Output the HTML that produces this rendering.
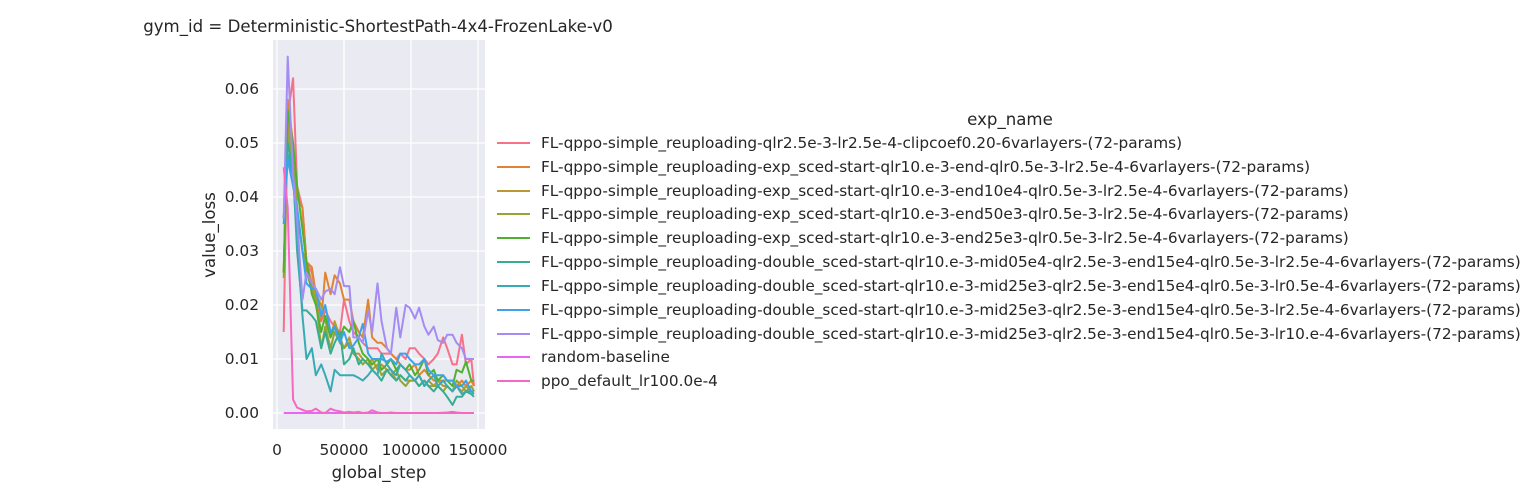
<!DOCTYPE html>
<html><head><meta charset="utf-8"><style>
html,body{margin:0;padding:0;background:#fff}
svg{display:block}
text{font-family:"DejaVu Sans","Liberation Sans",sans-serif;fill:#262626}
</style></head><body>
<svg width="1534" height="500" viewBox="0 0 1534 500" xmlns="http://www.w3.org/2000/svg">
<text x="378" y="32" font-size="16.6" text-anchor="middle">gym_id = Deterministic-ShortestPath-4x4-FrozenLake-v0</text>
<rect x="273" y="40" width="212" height="389" fill="#eaeaf2"/>
<g stroke="#fff" stroke-width="1.3">
<line x1="277" y1="40" x2="277" y2="429"/><line x1="344" y1="40" x2="344" y2="429"/><line x1="411" y1="40" x2="411" y2="429"/><line x1="478" y1="40" x2="478" y2="429"/>
<line x1="273" y1="413" x2="485" y2="413"/><line x1="273" y1="359" x2="485" y2="359"/><line x1="273" y1="305" x2="485" y2="305"/><line x1="273" y1="251" x2="485" y2="251"/><line x1="273" y1="197" x2="485" y2="197"/><line x1="273" y1="143" x2="485" y2="143"/><line x1="273" y1="89" x2="485" y2="89"/>
</g>
<g font-size="15.4" text-anchor="end">
<text x="259" y="418">0.00</text><text x="259" y="364">0.01</text><text x="259" y="310">0.02</text><text x="259" y="256">0.03</text><text x="259" y="202">0.04</text><text x="259" y="148">0.05</text><text x="259" y="94">0.06</text>
</g>
<g font-size="15.4" text-anchor="middle">
<text x="277" y="455">0</text><text x="344" y="455">50000</text><text x="411" y="455">100000</text><text x="478" y="455">150000</text>
<text x="379" y="478" font-size="16.6">global_step</text>
<text transform="translate(215,235) rotate(-90)" font-size="16.6">value_loss</text>
</g>
<g fill="none" stroke-width="2" stroke-linejoin="round" transform="translate(277,413) scale(1.34,-5.4)">
<polyline vector-effect="non-scaling-stroke" stroke="#f77189" points="5,15 8,55 12,62 15,42 19,38 22,28 26,26 29,22 33,17 36,19 40,17 43,16 47,15 50,21 54,17 57,15 61,14 64,13 68,12 71,12 75,12 78,11 82,11 85,11 89,10 92,11 96,10 99,12 103,12 106,11 110,10 113,9 117,10 120,11 124,14 127,12 131,9 134,9 138,14.5 141,9 145,10 147,5"/>
<polyline vector-effect="non-scaling-stroke" stroke="#e18432" points="5,26 8,58 12,50 15,40 19,38 22,28 26,27 29,22 33,17 36,26 40,22 43,25.5 47,24 50,21 54,21 57,17 61,15 64,14 68,21 71,14 75,13 78,13 82,12 85,11 89,10 92,9 96,8 99,8 103,9 106,7 110,8 113,7 117,6 120,6 124,6 127,6 131,6 134,5 138,6 141,5 145,6 147,5"/>
<polyline vector-effect="non-scaling-stroke" stroke="#bb9832" points="5,26 8,54 12,48 15,38 19,30 22,28 26,24 29,22 33,20 36,17 40,14 43,17 47,14 50,12 54,14 57,11 61,11 64,10 68,9 71,10 75,8 78,9 82,8 85,8 89,6 92,7 96,6 99,6 103,6 106,5 110,6 113,5 117,5 120,6 124,5 127,5 131,4 134,5 138,4 141,5 145,4 147,4"/>
<polyline vector-effect="non-scaling-stroke" stroke="#97a431" points="5,25 8,52 12,46 15,37 19,30 22,26 26,23 29,21 33,12 36,16 40,12 43,15 47,13 50,12 54,13 57,11 61,10 64,9 68,10 71,8 75,9 78,7 82,8 85,7 89,8 92,6 96,5 99,6 103,6 106,7 110,5 113,6 117,5 120,5 124,4 127,5 131,4 134,6 138,5 141,4 145,5 147,4"/>
<polyline vector-effect="non-scaling-stroke" stroke="#50b131" points="5,26 8,56 12,50 15,42 19,34 22,28 26,22 29,20 33,15 36,18 40,14 43,16 47,14 50,16 54,15 57,17 61,13 64,11 68,10 71,9 75,10 78,8 82,9 85,10 89,8 92,9 96,8 99,9 103,7 106,8 110,10 113,7 117,8 120,6 124,7 127,6 131,5 134,8 138,7.5 141,9.5 145,6 147,6"/>
<polyline vector-effect="non-scaling-stroke" stroke="#34ae91" points="5,36 8,50 12,45 15,30 19,19 22,19 26,18 29,17 33,12 36,15 40,11 43,13 47,15 50,9 54,10 57,12 61,9 64,10 68,9 71,8 75,7 78,6 82,8 85,7 89,6 92,7 96,6 99,7 103,6 106,5 110,6 113,5 117,4 120,5 124,4 127,3 131,1.5 134,3 138,3 141,4 145,3.5 147,3"/>
<polyline vector-effect="non-scaling-stroke" stroke="#37abb4" points="5,36 8,48 12,44 15,32 19,18 22,10 26,12 29,7 33,9 36,7 40,4 43,8 47,7 50,7 54,7 57,7 61,6.5 64,6 68,7 71,8 75,7 78,11 82,9 85,8 89,7 92,9 96,8 99,7 103,6 106,7 110,5 113,6 117,7 120,5 124,6 127,5 131,4 134,5 138,3.5 141,4 145,4 147,3.5"/>
<polyline vector-effect="non-scaling-stroke" stroke="#3ba3ec" points="5,35 8,47 12,42 15,38 19,30 22,24 26,23 29,23 33,18 36,20 40,15 43,16 47,13 50,15 54,12 57,12.5 61,14 64,16.5 68,11 71,10 75,10 78,10 82,9.5 85,10 89,9 92,11 96,11 99,10 103,9 106,9 110,10 113,8 117,7 120,7 124,7 127,6 131,6 134,5 138,5 141,6 145,4 147,4"/>
<polyline vector-effect="non-scaling-stroke" stroke="#a48cf4" points="5,36 8,66 12,44 15,36 19,21 22,26 26,24 29,23 33,21 36,22.5 40,23 43,22 47,27 50,23.5 54,23.5 57,14 61,14 64,13 68,19 71,15 75,24 78,17 82,12 85,11 89,19.5 92,14 96,20 99,19.5 103,17.5 106,19.5 110,16 113,14.5 117,16 120,13.5 124,13 127,14.5 131,14.5 134,13 138,12 141,10 145,10 147,10"/>
<polyline vector-effect="non-scaling-stroke" stroke="#e866f4" points="5,0 147,0"/>
<polyline vector-effect="non-scaling-stroke" stroke="#f668c2" points="5,45.5 8,38 12,2.5 15,1 19,0.6 22,0.3 26,0.4 29,0.8 33,0.1 36,0 40,0.8 43,0.5 47,0.3 50,0.1 54,0.2 57,0.1 61,0.2 64,0 68,0.1 71,0.5 75,0.1 78,0 82,0 85,0.1 89,0 95,0 100,0 110,0 120,0 127,0.1 131,0.2 134,0.1 138,0 147,0"/>
</g>
<text x="1010" y="125" font-size="16.6" text-anchor="middle">exp_name</text>
<g stroke-width="2">
<line x1="497" y1="143" x2="530" y2="143" stroke="#f77189"/>
<line x1="497" y1="167" x2="530" y2="167" stroke="#e18432"/>
<line x1="497" y1="191" x2="530" y2="191" stroke="#bb9832"/>
<line x1="497" y1="214" x2="530" y2="214" stroke="#97a431"/>
<line x1="497" y1="238" x2="530" y2="238" stroke="#50b131"/>
<line x1="497" y1="262" x2="530" y2="262" stroke="#34ae91"/>
<line x1="497" y1="286" x2="530" y2="286" stroke="#37abb4"/>
<line x1="497" y1="310" x2="530" y2="310" stroke="#3ba3ec"/>
<line x1="497" y1="334" x2="530" y2="334" stroke="#a48cf4"/>
<line x1="497" y1="357" x2="530" y2="357" stroke="#e866f4"/>
<line x1="497" y1="381" x2="530" y2="381" stroke="#f668c2"/>
</g>
<g font-size="15.3">
<text x="541" y="148">FL-qppo-simple_reuploading-qlr2.5e-3-lr2.5e-4-clipcoef0.20-6varlayers-(72-params)</text>
<text x="541" y="172">FL-qppo-simple_reuploading-exp_sced-start-qlr10.e-3-end-qlr0.5e-3-lr2.5e-4-6varlayers-(72-params)</text>
<text x="541" y="196">FL-qppo-simple_reuploading-exp_sced-start-qlr10.e-3-end10e4-qlr0.5e-3-lr2.5e-4-6varlayers-(72-params)</text>
<text x="541" y="219">FL-qppo-simple_reuploading-exp_sced-start-qlr10.e-3-end50e3-qlr0.5e-3-lr2.5e-4-6varlayers-(72-params)</text>
<text x="541" y="243">FL-qppo-simple_reuploading-exp_sced-start-qlr10.e-3-end25e3-qlr0.5e-3-lr2.5e-4-6varlayers-(72-params)</text>
<text x="541" y="267">FL-qppo-simple_reuploading-double_sced-start-qlr10.e-3-mid05e4-qlr2.5e-3-end15e4-qlr0.5e-3-lr2.5e-4-6varlayers-(72-params)</text>
<text x="541" y="291">FL-qppo-simple_reuploading-double_sced-start-qlr10.e-3-mid25e3-qlr2.5e-3-end15e4-qlr0.5e-3-lr0.5e-4-6varlayers-(72-params)</text>
<text x="541" y="315">FL-qppo-simple_reuploading-double_sced-start-qlr10.e-3-mid25e3-qlr2.5e-3-end15e4-qlr0.5e-3-lr2.5e-4-6varlayers-(72-params)</text>
<text x="541" y="339">FL-qppo-simple_reuploading-double_sced-start-qlr10.e-3-mid25e3-qlr2.5e-3-end15e4-qlr0.5e-3-lr10.e-4-6varlayers-(72-params)</text>
<text x="541" y="362">random-baseline</text>
<text x="541" y="386">ppo_default_lr100.0e-4</text>
</g>
</svg>
</body></html>
